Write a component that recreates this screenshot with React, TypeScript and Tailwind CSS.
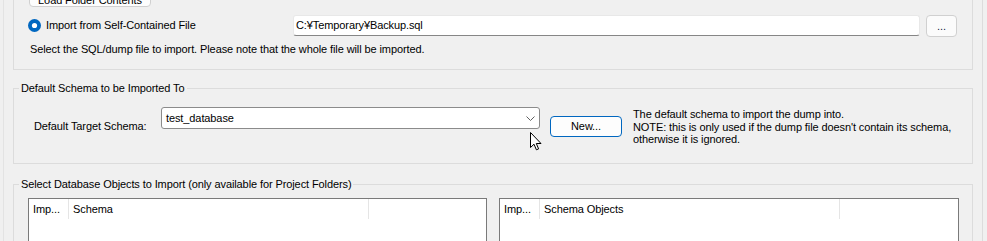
import React from 'react';

const font = "font-['Liberation_Sans',Arial,sans-serif] text-[11px] tracking-[-0.1px] text-black";

const RadioChecked = () => (
  <svg width="13" height="13" viewBox="0 0 13 13" className="shrink-0">
    <circle cx="6.5" cy="6.5" r="6.5" fill="#0067c0" />
    <circle cx="6.5" cy="6.5" r="2.6" fill="#ffffff" />
  </svg>
);

const Chevron = () => (
  <svg width="9" height="5" viewBox="0 0 9 5">
    <path d="M0.5 0.5 L4.5 4.5 L8.5 0.5" fill="none" stroke="#606060" strokeWidth="1" />
  </svg>
);

const Cursor = () => (
  <svg width="13" height="20" viewBox="0 0 13 20" className="absolute left-[530px] top-[132px]">
    <path
      d="M0.5 0.5 L0.5 15.5 L4 12.2 L6.4 17.8 L8.6 16.9 L6.3 11.5 L11 11.5 Z"
      fill="#ffffff"
      stroke="#000000"
      strokeWidth="1"
      strokeLinejoin="round"
    />
  </svg>
);

interface ListProps {
  second: string;
  width: string;
}

// List view with column headers only
const ListBox: React.FC<ListProps> = ({ second, width }) => (
  <div className={`${width} h-[60px] shrink-0 border border-[#7a7a7a] bg-white`}>
    <div className="flex h-[20px]">
      <div className="w-[40px] border-r border-[#e5e5e5] pl-[4px] leading-[20px]">Imp...</div>
      <div className="w-[300px] border-r border-[#e5e5e5] pl-[4px] leading-[20px]">{second}</div>
    </div>
  </div>
);

export default function App() {
  return (
    <div className={`relative flex w-[987px] h-[241px] overflow-hidden bg-[#f0f0f0] ${font}`}>
      <div className="w-[3px] shrink-0" />
      <div className="w-[10px] shrink-0 border-l border-[#e3e3e3]" />

      <div className="flex w-[960px] shrink-0 flex-col">
        {/* Import source */}
        <div className="-mt-[24px] border border-[#dcdcdc] pt-[8px] pl-[14px] pr-[14px] pb-[12px]">
          <button className="ml-px block h-[22px] w-[122px] overflow-hidden rounded-[4px] border border-[#d0d0d0] bg-[#fdfdfd] leading-[28px]">
            Load Folder Contents
          </button>

          <div className="mt-[8px] flex h-[21px] items-center">
            <div className="flex w-[265px] items-center gap-[5px]">
              <RadioChecked />
              <span>Import from Self-Contained File</span>
            </div>
            <div className="flex h-[21px] w-[627px] items-center rounded-[3px] border border-[#e8e8e8] border-b-[#868686] bg-white pl-[2px]">
              C:¥Temporary¥Backup.sql
            </div>
            <button className="ml-[6px] h-[22px] w-[31px] rounded-[4px] border border-[#d0d0d0] bg-[#fbfbfb] leading-[18px] text-[#1a1a4a]">
              ...
            </button>
          </div>

          <p className="mt-[6px] pl-[2px] leading-[15px]">
            Select the SQL/dump file to import. Please note that the whole file will be imported.
          </p>
        </div>

        {/* Default schema */}
        <fieldset className="mt-[11px] border border-[#dcdcdc]">
          <legend className="ml-[5px] px-[2px] leading-[15px]">Default Schema to be Imported To</legend>
          <div className="flex h-[67px] items-start pt-[11px] pl-[20px]">
            <span className="mt-[12px] w-[127px] leading-[15px]">Default Target Schema:</span>
            <div className="flex h-[22px] w-[379px] items-center justify-between rounded-[3px] border border-[#8b8b8b] bg-white pl-[4px] pr-[4px]">
              <span>test_database</span>
              <Chevron />
            </div>
            <button className="ml-[10px] mt-[9px] h-[21px] w-[72px] rounded-[4px] border border-[#0067c0] bg-[#fdfdfd] leading-[19px]">
              New...
            </button>
            <div className="ml-[11px] mt-px leading-[12.5px]">
              <p>The default schema to import the dump into.</p>
              <p>NOTE: this is only used if the dump file doesn't contain its schema,</p>
              <p>otherwise it is ignored.</p>
            </div>
          </div>
        </fieldset>

        {/* Objects */}
        <fieldset className="mt-[13px] border border-[#dcdcdc]">
          <legend className="ml-[5px] px-[2px] leading-[15px]">
            Select Database Objects to Import (only available for Project Folders)
          </legend>
          <div className="flex gap-[12px] pt-[6px] pl-[14px] h-[80px]">
            <ListBox second="Schema" width="w-[459px]" />
            <ListBox second="Schema Objects" width="w-[460px]" />
          </div>
        </fieldset>
      </div>

      <div className="w-[9px] shrink-0" />
      <div className="w-[5px] shrink-0 border-l border-[#dcdcdc]" />

      <Cursor />
    </div>
  );
}
